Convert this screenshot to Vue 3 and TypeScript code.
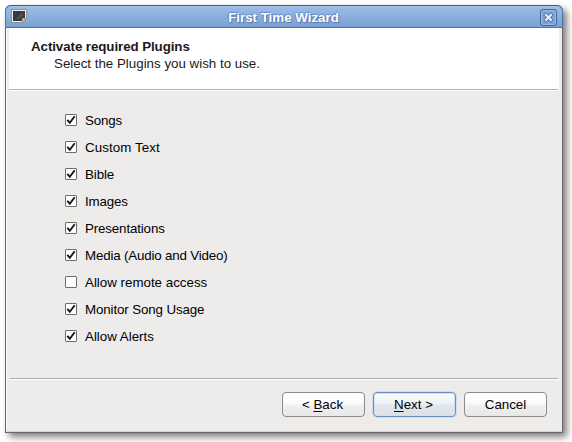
<script setup lang="ts">
import { ref } from 'vue'

interface Plugin {
  name: string
  active: boolean
  tracking: number
}

const plugins = ref<Plugin[]>([
  { name: 'Songs', active: true, tracking: -0.15 },
  { name: 'Custom Text', active: true, tracking: 0.08 },
  { name: 'Bible', active: true, tracking: -0.1 },
  { name: 'Images', active: true, tracking: -0.15 },
  { name: 'Presentations', active: true, tracking: -0.14 },
  { name: 'Media (Audio and Video)', active: true, tracking: -0.17 },
  { name: 'Allow remote access', active: false, tracking: 0 },
  { name: 'Monitor Song Usage', active: true, tracking: -0.12 },
  { name: 'Allow Alerts', active: true, tracking: 0 },
])
</script>

<template>
  <main class="desktop">
    <section class="window">
      <header class="titlebar">
        <svg class="app-icon" width="16" height="14" viewBox="0 0 16 14">
          <path d="M.5.5h15v9l-4 4H.5z" fill="#efefeb" stroke="#8f918c" />
          <path d="M2 2h12v7h-3v3H2z" fill="#343a3d" />
          <path d="M4 10 12 3v4l-3 3z" fill="#4a5053" />
          <path d="M11.5 13V9.5H15z" fill="#d5d6d0" stroke="#9b9c97" />
        </svg>
        <h1 class="title">First Time Wizard</h1>
        <button class="close" aria-label="Close">
          <svg width="17" height="17" viewBox="0 0 17 17">
            <path d="m6 6 5 5m0-5-5 5" stroke="#507bb5" stroke-width="4" stroke-linecap="square" />
            <path d="m6 6 5 5m0-5-5 5" stroke="#e9f0fa" stroke-width="2" stroke-linecap="square" />
          </svg>
        </button>
      </header>
      <div class="body">
        <div class="intro">
          <h2>Activate required Plugins</h2>
          <p>Select the Plugins you wish to use.</p>
        </div>
        <div class="plugins">
          <label v-for="plugin in plugins" :key="plugin.name" class="plugin">
            <input v-model="plugin.active" class="native" type="checkbox" />
            <span class="box">
              <svg v-if="plugin.active" width="12" height="12" viewBox="0 0 12 12">
                <path d="m2.3 5.8 2.5 3L9.7 2.2" fill="none" stroke="#151515" stroke-width="1.9" />
              </svg>
            </span>
            <span :style="{ letterSpacing: plugin.tracking + 'px' }">{{ plugin.name }}</span>
          </label>
        </div>
        <footer class="actions">
          <button class="btn shifted">&lt; <span class="key">B</span>ack</button>
          <button class="btn primary shifted"><span class="key">N</span>ext &gt;</button>
          <button class="btn">Cancel</button>
        </footer>
      </div>
    </section>
  </main>
</template>

<style>
body {
  background: #fff;
}
</style>

<style scoped>
* {
  box-sizing: border-box;
}
.desktop {
  width: 572px;
  height: 442px;
  padding: 5px;
  overflow: hidden;
  background: #fff;
  font-family: "Liberation Sans", Arial, sans-serif;
  font-size: 13.33px;
  color: #000;
}
.window {
  display: flex;
  flex-direction: column;
  width: 558px;
  height: 428px;
  border: 1px solid #686765;
  border-top: 0;
  border-radius: 6px 6px 0 0;
  background: #edeceb;
  box-shadow: 4px 4px 7px rgba(0, 0, 0, 0.5);
}
.titlebar {
  display: flex;
  align-items: center;
  height: 23px;
  margin: 0 -1px;
  padding: 0 5px 0 6px;
  border: 1px solid #4a74ab;
  border-top-color: #3f5880;
  border-radius: 6px 6px 0 0;
  background: linear-gradient(#9dbde8, #92b3e0 35%, #7aa0d2);
  box-shadow: inset 0 1px #a9c5ec;
}
.app-icon {
  flex: none;
  margin: 0 0 1px -1px;
}
.title {
  flex: 1;
  margin: 0;
  padding-top: 2px;
  text-align: center;
  font-size: 13.33px;
  line-height: 16px;
  color: #fff;
  text-shadow: 1px 1px 1px #5179b0, -1px 0 1px #658dc4, 0 -1px 1px #658dc4;
}
.close {
  display: block;
  width: 17px;
  height: 17px;
  margin-top: 1px;
  padding: 0;
  border: 1px solid #3d669e;
  border-radius: 3px;
  background: #7fa5d8;
  box-shadow: inset 0 0 0 1px #9bbae4;
}
.close svg {
  display: block;
  margin: -1px;
}
.body {
  display: flex;
  flex: 1;
  flex-direction: column;
  padding: 0 3px 0 2px;
  border-left: 1px solid #fafafa;
  border-bottom: 1px solid #d6d5d3;
}
.intro {
  height: 63px;
  padding: 10px 22px 0;
  border-bottom: 1px solid #fff;
  background: linear-gradient(#b0aeac, #b0aeac) 0 100% / calc(100% - 1px) 1px no-repeat #fff;
  color: #1a1a1a;
}
.intro h2,
.intro p {
  margin: 0;
  font-size: 13.33px;
  line-height: 17px;
}
.intro h2 {
  letter-spacing: -0.08px;
}
.intro p {
  padding-left: 23px;
}
.plugins {
  flex: 1;
  padding: 16px 0 0 56px;
}
.plugin {
  display: flex;
  align-items: center;
  gap: 8px;
  width: max-content;
  height: 27px;
}
.native {
  position: absolute;
  opacity: 0;
}
.box {
  width: 12px;
  height: 12px;
  margin-bottom: 2px;
  border: 1px solid #6f6e6b;
  border-radius: 1px;
  background: #fff;
}
.box svg {
  display: block;
  margin: -1px;
}
.actions {
  display: flex;
  justify-content: flex-end;
  gap: 8px;
  height: 53px;
  padding: 13px 12px 0 0;
  background:
    linear-gradient(#b0aeac, #b0aeac) 0 0 / calc(100% - 1px) 1px no-repeat,
    linear-gradient(#fff, #fff) 0 1px / 100% 1px no-repeat;
  padding-top: 14px;
}
.btn {
  width: 83px;
  height: 25px;
  padding: 0;
  border: 1px solid #8e8b88;
  border-radius: 4px;
  background: linear-gradient(#fff, #fafafa 48%, #f1f0f0 52%, #e9e8e8);
  font: inherit;
  color: #000;
}
.shifted {
  padding-right: 2px;
}
.primary {
  border-color: #6c8fc0;
  background: linear-gradient(#fbfcfe, #edf1f6 48%, #e1e6ec 52%, #dce1e8);
  box-shadow: 0 0 0 1px rgba(160, 192, 232, 0.35), inset 0 0 0 1px #cfdef2;
}
.key {
  text-decoration: underline;
  text-decoration-skip-ink: none;
  text-underline-offset: 2px;
  text-decoration-thickness: 1px;
}
</style>
